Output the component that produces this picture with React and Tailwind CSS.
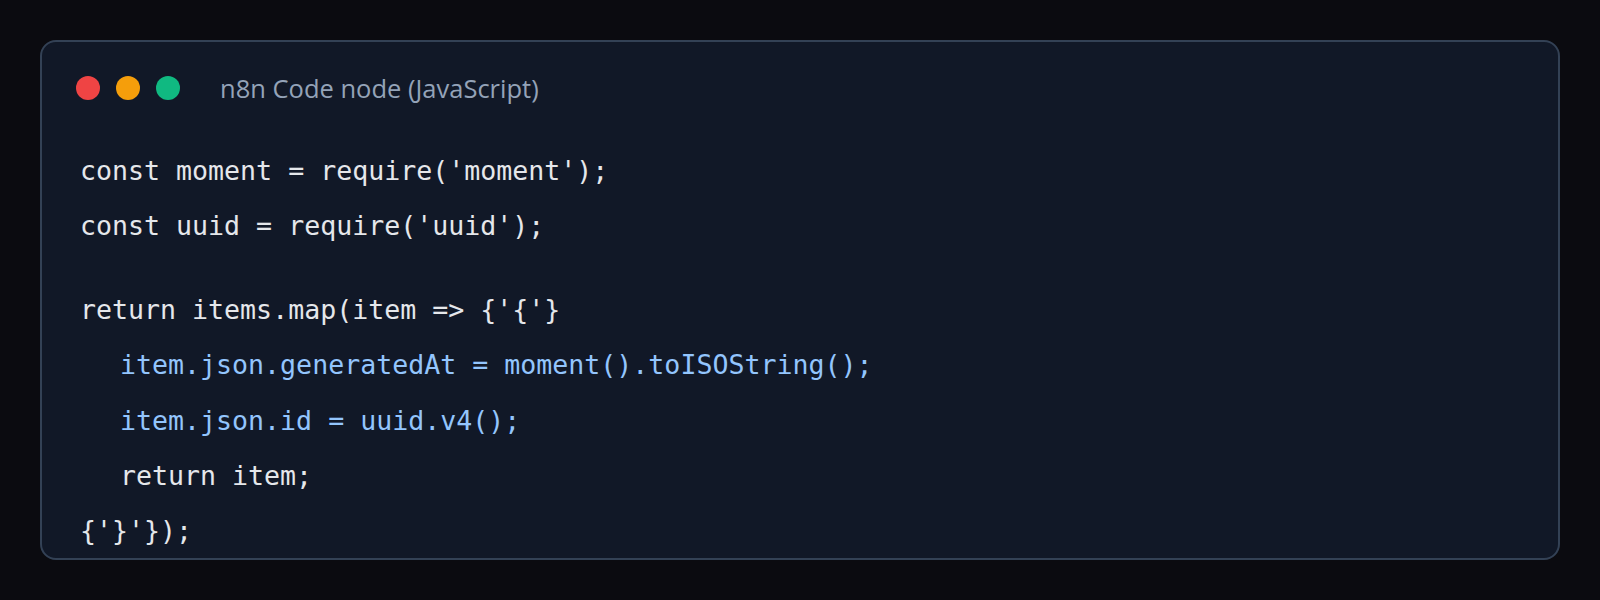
const lines = [
  { text: "const moment = require('moment');" },
  { text: "const uuid = require('uuid');" },
  { blank: true },
  { text: "return items.map(item => {'{'}" },
  { text: "item.json.generatedAt = moment().toISOString();", indent: true, blue: true },
  { text: "item.json.id = uuid.v4();", indent: true, blue: true },
  { text: "return item;", indent: true },
  { text: "{'}'});" },
];

const App = () => {
  return (
    <div className="min-h-screen bg-[#0b0b10] p-10">
      <div className="h-[520px] overflow-hidden rounded-2xl border-2 border-[#334155] bg-[#111827]">
        {/* window bar */}
        <div className="flex items-center px-[34px] pt-[34px]">
          <div className="flex gap-4">
            <span className="h-6 w-6 rounded-full bg-[#ef4444]" />
            <span className="h-6 w-6 rounded-full bg-[#f59e0b]" />
            <span className="h-6 w-6 rounded-full bg-[#10b981]" />
          </div>
          <span className="ml-10 font-['Open_Sans',sans-serif] text-[25.5px] leading-6 text-[#94a3b8]">
            n8n Code node (JavaScript)
          </span>
        </div>

        {/* code */}
        <div className="mt-[43px] px-[38px] font-['DejaVu_Sans_Mono',monospace] text-[26.6px] leading-[55.4px] whitespace-pre">
          {lines.map((l, i) =>
            l.blank ? (
              <div key={i} className="h-[28px]" />
            ) : (
              <div
                key={i}
                className={`${l.indent ? 'pl-10' : ''} ${l.blue ? 'text-[#93c5fd]' : 'text-[#e5e7eb]'}`}
              >
                {l.text}
              </div>
            )
          )}
        </div>
      </div>
    </div>
  );
};

export default App;
